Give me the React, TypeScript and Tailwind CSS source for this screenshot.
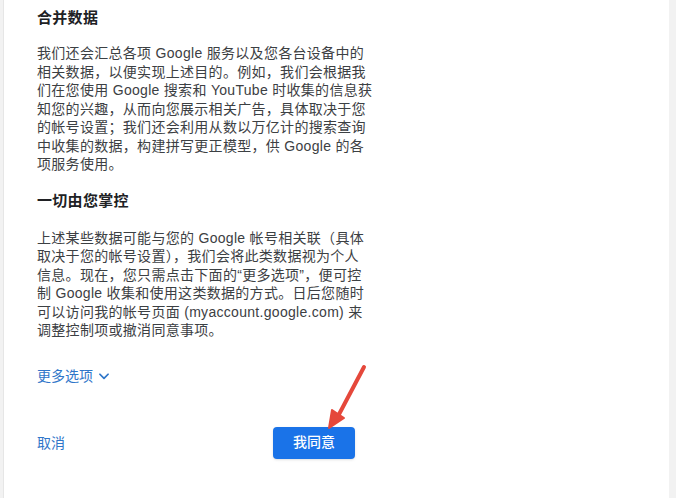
import React from 'react';

const font = { fontFamily: '"Liberation Sans", "Noto Sans CJK SC", sans-serif' };

const para1 = [
  '我们还会汇总各项 Google 服务以及您各台设备中的',
  '相关数据，以便实现上述目的。例如，我们会根据我',
  '们在您使用 Google 搜索和 YouTube 时收集的信息获',
  '知您的兴趣，从而向您展示相关广告，具体取决于您',
  '的帐号设置；我们还会利用从数以万亿计的搜索查询',
  '中收集的数据，构建拼写更正模型，供 Google 的各',
  '项服务使用。',
];

const para2 = [
  '上述某些数据可能与您的 Google 帐号相关联（具体',
  '取决于您的帐号设置），我们会将此类数据视为个人',
  '信息。现在，您只需点击下面的“更多选项”，便可控',
  '制 Google 收集和使用这类数据的方式。日后您随时',
  '可以访问我的帐号页面 (myaccount.google.com) 来',
  '调整控制项或撤消同意事项。',
];

const Paragraph = ({ lines }: { lines: string[] }) => (
  <div className="text-[14px] leading-[18.5px] tracking-[0.3px] text-[#3c4043]">
    {lines.map((l, i) => (
      <div key={i} className="whitespace-nowrap">{l}</div>
    ))}
  </div>
);

export default function App() {
  return (
    <div className="w-[676px] h-[498px] bg-[#f2f2f2] flex overflow-hidden" style={font}>
      <div className="relative ml-[3px] w-[666px] h-full bg-white border-l border-[#e6e6e6] pl-[33px] pt-[7px]">
        {/* Section 1 */}
        <h2 className="text-[15px] leading-[22px] font-bold tracking-[0.3px] text-[#202124]">合并数据</h2>
        <div className="mt-[15px]">
          <Paragraph lines={para1} />
        </div>

        {/* Section 2 */}
        <h2 className="mt-[16px] text-[15px] leading-[22px] font-bold tracking-[0.3px] text-[#202124]">一切由您掌控</h2>
        <div className="mt-[17px]">
          <Paragraph lines={para2} />
        </div>

        {/* More options */}
        <button className="mt-[26px] flex items-center gap-[4px] text-[14px] leading-[20px] text-[#2f76c9]">
          更多选项
          <svg width="14" height="14" viewBox="0 0 24 24" fill="none" stroke="#2f76c9" strokeWidth="3" strokeLinecap="round" strokeLinejoin="round">
            <path d="M5 9l7 7 7-7" />
          </svg>
        </button>

        {/* Actions */}
        <div className="mt-[41px] flex items-center w-[318px] justify-between">
          <button className="text-[14px] leading-[20px] text-[#2f76c9]">取消</button>
          <button className="w-[82px] h-[32px] rounded-[4px] bg-[#1a73e8] text-white text-[14px] font-medium shadow-sm">
            我同意
          </button>
        </div>

        {/* Annotation arrow */}
        <svg className="absolute left-[315px] top-[360px]" width="60" height="75" viewBox="0 0 60 75" fill="none">
          <path d="M45 7 L17 60" stroke="#e5483b" strokeWidth="4" strokeLinecap="round" />
          <path d="M10 68 L13 50 L25 58 Z" fill="#e5483b" stroke="#e5483b" strokeWidth="2" strokeLinejoin="round" />
        </svg>
      </div>
    </div>
  );
}
